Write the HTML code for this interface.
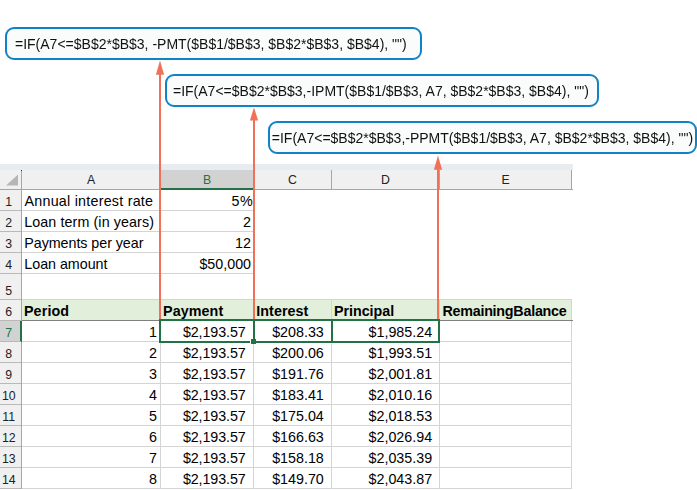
<!DOCTYPE html>
<html lang="en"><head><meta charset="utf-8"><title>Loan amortization formulas</title>
<style>
html,body{margin:0;padding:0;background:#fff;}
body{width:697px;height:490px;position:relative;overflow:hidden;font-family:"Liberation Sans",sans-serif;}
body>div,body>svg{position:absolute;}
.t{font-size:14.3px;color:#000;white-space:nowrap;overflow:visible;}
.t.b{font-weight:bold;}
.t.hd{font-size:12.3px;color:#222;}
.t.hd.sel{color:#217346;}
.box{box-sizing:content-box;border:2px solid #0f83c4;border-radius:9px;background:#fafcfc;font-size:14px;color:#111;white-space:nowrap;overflow:hidden;will-change:transform;}
</style></head>
<body>
<div style="left:0px;top:164px;width:573px;height:6px;background:#e7ecf0;"></div>
<div style="left:0px;top:170px;width:572px;height:19px;background:#f0f0f0;"></div>
<div style="left:161px;top:170px;width:92px;height:18px;background:#d2d2d2;"></div>
<div style="left:161px;top:188px;width:93px;height:2px;background:#217346;"></div>
<div style="left:0px;top:189px;width:161px;height:1px;background:#a6a6a6;"></div>
<div style="left:254px;top:189px;width:319px;height:1px;background:#a6a6a6;"></div>
<div style="left:21px;top:170px;width:1px;height:19px;background:#a6a6a6;"></div>
<div style="left:160px;top:170px;width:1px;height:19px;background:#a6a6a6;"></div>
<div style="left:253px;top:170px;width:1px;height:19px;background:#a6a6a6;"></div>
<div style="left:331px;top:170px;width:1px;height:19px;background:#a6a6a6;"></div>
<div style="left:439px;top:170px;width:1px;height:19px;background:#a6a6a6;"></div>
<div style="left:571px;top:170px;width:1px;height:19px;background:#a6a6a6;"></div>
<div style="left:21px;top:170px;width:1px;height:1px;background:#333;"></div>
<svg style="left:5px;top:173px" width="14" height="14" viewBox="0 0 14 14"><polygon points="13,1.5 13,12.5 1,12.5" fill="#b6b6b6"/></svg>
<div class="t hd" style="left:22px;top:171px;width:138px;height:19px;line-height:19px;text-align:center;">A</div>
<div class="t hd sel" style="left:161px;top:171px;width:92px;height:19px;line-height:19px;text-align:center;">B</div>
<div class="t hd" style="left:254px;top:171px;width:77px;height:19px;line-height:19px;text-align:center;">C</div>
<div class="t hd" style="left:332px;top:171px;width:107px;height:19px;line-height:19px;text-align:center;">D</div>
<div class="t hd" style="left:440px;top:171px;width:131px;height:19px;line-height:19px;text-align:center;">E</div>
<div style="left:0px;top:190px;width:21px;height:298px;background:#f0f0f0;"></div>
<div style="left:21px;top:190px;width:1px;height:299px;background:#a6a6a6;"></div>
<div style="left:0px;top:321px;width:20px;height:20px;background:#d2d2d2;"></div>
<div style="left:20px;top:321px;width:2px;height:21px;background:#217346;"></div>
<div style="left:0px;top:210px;width:21px;height:1px;background:#b9b9b9;"></div>
<div class="t hd" style="left:0px;top:192px;width:17.5px;height:20px;line-height:20px;text-align:center;">1</div>
<div style="left:0px;top:231px;width:21px;height:1px;background:#b9b9b9;"></div>
<div class="t hd" style="left:0px;top:213px;width:17.5px;height:20px;line-height:20px;text-align:center;">2</div>
<div style="left:0px;top:252px;width:21px;height:1px;background:#b9b9b9;"></div>
<div class="t hd" style="left:0px;top:234px;width:17.5px;height:20px;line-height:20px;text-align:center;">3</div>
<div style="left:0px;top:273px;width:21px;height:1px;background:#b9b9b9;"></div>
<div class="t hd" style="left:0px;top:255px;width:17.5px;height:20px;line-height:20px;text-align:center;">4</div>
<div style="left:0px;top:299px;width:21px;height:1px;background:#b9b9b9;"></div>
<div class="t hd" style="left:0px;top:281px;width:17.5px;height:20px;line-height:20px;text-align:center;">5</div>
<div style="left:0px;top:320px;width:21px;height:1px;background:#b9b9b9;"></div>
<div class="t hd" style="left:0px;top:302px;width:17.5px;height:20px;line-height:20px;text-align:center;">6</div>
<div style="left:0px;top:341px;width:21px;height:1px;background:#b9b9b9;"></div>
<div class="t hd sel" style="left:0px;top:323px;width:17.5px;height:20px;line-height:20px;text-align:center;">7</div>
<div style="left:0px;top:362px;width:21px;height:1px;background:#b9b9b9;"></div>
<div class="t hd" style="left:0px;top:344px;width:17.5px;height:20px;line-height:20px;text-align:center;">8</div>
<div style="left:0px;top:383px;width:21px;height:1px;background:#b9b9b9;"></div>
<div class="t hd" style="left:0px;top:365px;width:17.5px;height:20px;line-height:20px;text-align:center;">9</div>
<div style="left:0px;top:404px;width:21px;height:1px;background:#b9b9b9;"></div>
<div class="t hd" style="left:0px;top:386px;width:17.5px;height:20px;line-height:20px;text-align:center;">10</div>
<div style="left:0px;top:425px;width:21px;height:1px;background:#b9b9b9;"></div>
<div class="t hd" style="left:0px;top:407px;width:17.5px;height:20px;line-height:20px;text-align:center;">11</div>
<div style="left:0px;top:446px;width:21px;height:1px;background:#b9b9b9;"></div>
<div class="t hd" style="left:0px;top:428px;width:17.5px;height:20px;line-height:20px;text-align:center;">12</div>
<div style="left:0px;top:467px;width:21px;height:1px;background:#b9b9b9;"></div>
<div class="t hd" style="left:0px;top:449px;width:17.5px;height:20px;line-height:20px;text-align:center;">13</div>
<div style="left:0px;top:488px;width:21px;height:1px;background:#b9b9b9;"></div>
<div class="t hd" style="left:0px;top:470px;width:17.5px;height:20px;line-height:20px;text-align:center;">14</div>
<div style="left:22px;top:210px;width:233px;height:1px;background:#d4d4d4;"></div>
<div style="left:22px;top:231px;width:233px;height:1px;background:#d4d4d4;"></div>
<div style="left:22px;top:252px;width:233px;height:1px;background:#d4d4d4;"></div>
<div style="left:22px;top:273px;width:233px;height:1px;background:#d4d4d4;"></div>
<div style="left:160px;top:190px;width:1px;height:84px;background:#d4d4d4;"></div>
<div style="left:254px;top:190px;width:1px;height:84px;background:#d4d4d4;"></div>
<div style="left:22px;top:299px;width:550px;height:1px;background:#d4d4d4;"></div>
<div style="left:22px;top:300px;width:550px;height:20px;background:#e2efda;"></div>
<div style="left:160px;top:300px;width:1px;height:20px;background:#d0d8cb;"></div>
<div style="left:253px;top:300px;width:1px;height:20px;background:#d0d8cb;"></div>
<div style="left:331px;top:300px;width:1px;height:20px;background:#d0d8cb;"></div>
<div style="left:439px;top:300px;width:1px;height:20px;background:#d0d8cb;"></div>
<div style="left:571px;top:300px;width:1px;height:20px;background:#d0d8cb;"></div>
<div style="left:22px;top:320px;width:551px;height:1px;background:#808080;"></div>
<div style="left:22px;top:341px;width:550px;height:1px;background:#d4d4d4;"></div>
<div style="left:22px;top:362px;width:550px;height:1px;background:#d4d4d4;"></div>
<div style="left:22px;top:383px;width:550px;height:1px;background:#d4d4d4;"></div>
<div style="left:22px;top:404px;width:550px;height:1px;background:#d4d4d4;"></div>
<div style="left:22px;top:425px;width:550px;height:1px;background:#d4d4d4;"></div>
<div style="left:22px;top:446px;width:550px;height:1px;background:#d4d4d4;"></div>
<div style="left:22px;top:467px;width:550px;height:1px;background:#d4d4d4;"></div>
<div style="left:22px;top:488px;width:550px;height:1px;background:#d4d4d4;"></div>
<div style="left:160px;top:321px;width:1px;height:168px;background:#d4d4d4;"></div>
<div style="left:253px;top:321px;width:1px;height:168px;background:#d4d4d4;"></div>
<div style="left:331px;top:321px;width:1px;height:168px;background:#d4d4d4;"></div>
<div style="left:439px;top:321px;width:1px;height:168px;background:#d4d4d4;"></div>
<div style="left:571px;top:321px;width:1px;height:168px;background:#d4d4d4;"></div>
<div class="t " id="c0r1" style="left:24.49px;top:191px;height:20px;line-height:20px;letter-spacing:0.239px;">Annual interest rate</div>
<div class="t " id="c0r2" style="left:24.16px;top:212px;height:20px;line-height:20px;letter-spacing:0.100px;">Loan term (in years)</div>
<div class="t " id="c0r3" style="left:24.28px;top:233px;height:20px;line-height:20px;letter-spacing:-0.053px;">Payments per year</div>
<div class="t " id="c0r4" style="left:24.35px;top:254px;height:20px;line-height:20px;letter-spacing:-0.034px;">Loan amount</div>
<div class="t " id="c1r1" style="right:444.28px;margin-right:-0.460px;top:191px;height:20px;line-height:20px;letter-spacing:0.460px;">5%</div>
<div class="t " id="c1r2" style="right:446.00px;margin-right:0.000px;top:212px;height:20px;line-height:20px;">2</div>
<div class="t " id="c1r3" style="right:446.00px;margin-right:0.000px;top:233px;height:20px;line-height:20px;">12</div>
<div class="t " id="c1r4" style="right:445.93px;margin-right:-0.000px;top:254px;height:20px;line-height:20px;letter-spacing:0.000px;">$50,000</div>
<div class="t b" id="c0r6" style="left:23.94px;top:301px;height:20px;line-height:20px;letter-spacing:0.136px;">Period</div>
<div class="t b" id="c1r6" style="left:163.04px;top:301px;height:20px;line-height:20px;letter-spacing:0.097px;">Payment</div>
<div class="t b" id="c2r6" style="left:256.22px;top:301px;height:20px;line-height:20px;letter-spacing:0.066px;">Interest</div>
<div class="t b" id="c3r6" style="left:333.95px;top:301px;height:20px;line-height:20px;letter-spacing:-0.024px;">Principal</div>
<div class="t b" id="c4r6" style="left:442.41px;top:301px;height:20px;line-height:20px;letter-spacing:-0.238px;">RemainingBalance</div>
<div class="t " id="c0r7" style="right:540.00px;margin-right:0.000px;top:322px;height:20px;line-height:20px;">1</div>
<div class="t " id="c1r7" style="right:451.31px;margin-right:0.100px;top:322px;height:20px;line-height:20px;letter-spacing:-0.100px;">$2,193.57</div>
<div class="t " id="c2r7" style="right:373.20px;margin-right:0.003px;top:322px;height:20px;line-height:20px;letter-spacing:-0.003px;">$208.33</div>
<div class="t " id="c3r7" style="right:264.86px;margin-right:-0.000px;top:322px;height:20px;line-height:20px;letter-spacing:0.000px;">$1,985.24</div>
<div class="t " id="c0r8" style="right:540.00px;margin-right:0.000px;top:343px;height:20px;line-height:20px;">2</div>
<div class="t " id="c1r8" style="right:451.31px;margin-right:0.100px;top:343px;height:20px;line-height:20px;letter-spacing:-0.100px;">$2,193.57</div>
<div class="t " id="c2r8" style="right:373.20px;margin-right:0.003px;top:343px;height:20px;line-height:20px;letter-spacing:-0.003px;">$200.06</div>
<div class="t " id="c3r8" style="right:264.86px;margin-right:-0.000px;top:343px;height:20px;line-height:20px;letter-spacing:0.000px;">$1,993.51</div>
<div class="t " id="c0r9" style="right:540.00px;margin-right:0.000px;top:364px;height:20px;line-height:20px;">3</div>
<div class="t " id="c1r9" style="right:451.31px;margin-right:0.100px;top:364px;height:20px;line-height:20px;letter-spacing:-0.100px;">$2,193.57</div>
<div class="t " id="c2r9" style="right:373.20px;margin-right:0.003px;top:364px;height:20px;line-height:20px;letter-spacing:-0.003px;">$191.76</div>
<div class="t " id="c3r9" style="right:264.86px;margin-right:-0.000px;top:364px;height:20px;line-height:20px;letter-spacing:0.000px;">$2,001.81</div>
<div class="t " id="c0r10" style="right:540.00px;margin-right:0.000px;top:385px;height:20px;line-height:20px;">4</div>
<div class="t " id="c1r10" style="right:451.31px;margin-right:0.100px;top:385px;height:20px;line-height:20px;letter-spacing:-0.100px;">$2,193.57</div>
<div class="t " id="c2r10" style="right:373.20px;margin-right:0.003px;top:385px;height:20px;line-height:20px;letter-spacing:-0.003px;">$183.41</div>
<div class="t " id="c3r10" style="right:264.86px;margin-right:-0.000px;top:385px;height:20px;line-height:20px;letter-spacing:0.000px;">$2,010.16</div>
<div class="t " id="c0r11" style="right:540.00px;margin-right:0.000px;top:406px;height:20px;line-height:20px;">5</div>
<div class="t " id="c1r11" style="right:451.31px;margin-right:0.100px;top:406px;height:20px;line-height:20px;letter-spacing:-0.100px;">$2,193.57</div>
<div class="t " id="c2r11" style="right:373.20px;margin-right:0.003px;top:406px;height:20px;line-height:20px;letter-spacing:-0.003px;">$175.04</div>
<div class="t " id="c3r11" style="right:264.86px;margin-right:-0.000px;top:406px;height:20px;line-height:20px;letter-spacing:0.000px;">$2,018.53</div>
<div class="t " id="c0r12" style="right:540.00px;margin-right:0.000px;top:427px;height:20px;line-height:20px;">6</div>
<div class="t " id="c1r12" style="right:451.31px;margin-right:0.100px;top:427px;height:20px;line-height:20px;letter-spacing:-0.100px;">$2,193.57</div>
<div class="t " id="c2r12" style="right:373.20px;margin-right:0.003px;top:427px;height:20px;line-height:20px;letter-spacing:-0.003px;">$166.63</div>
<div class="t " id="c3r12" style="right:264.86px;margin-right:-0.000px;top:427px;height:20px;line-height:20px;letter-spacing:0.000px;">$2,026.94</div>
<div class="t " id="c0r13" style="right:540.00px;margin-right:0.000px;top:448px;height:20px;line-height:20px;">7</div>
<div class="t " id="c1r13" style="right:451.31px;margin-right:0.100px;top:448px;height:20px;line-height:20px;letter-spacing:-0.100px;">$2,193.57</div>
<div class="t " id="c2r13" style="right:373.20px;margin-right:0.003px;top:448px;height:20px;line-height:20px;letter-spacing:-0.003px;">$158.18</div>
<div class="t " id="c3r13" style="right:264.86px;margin-right:-0.000px;top:448px;height:20px;line-height:20px;letter-spacing:0.000px;">$2,035.39</div>
<div class="t " id="c0r14" style="right:540.00px;margin-right:0.000px;top:469px;height:20px;line-height:20px;">8</div>
<div class="t " id="c1r14" style="right:451.31px;margin-right:0.100px;top:469px;height:20px;line-height:20px;letter-spacing:-0.100px;">$2,193.57</div>
<div class="t " id="c2r14" style="right:373.20px;margin-right:0.003px;top:469px;height:20px;line-height:20px;letter-spacing:-0.003px;">$149.70</div>
<div class="t " id="c3r14" style="right:264.86px;margin-right:-0.000px;top:469px;height:20px;line-height:20px;letter-spacing:0.000px;">$2,043.87</div>
<div style="left:159px;top:319px;width:281px;height:2px;background:#217346;"></div>
<div style="left:159px;top:341px;width:91px;height:2px;background:#217346;"></div>
<div style="left:253px;top:341px;width:187px;height:2px;background:#217346;"></div>
<div style="left:159px;top:319px;width:2px;height:24px;background:#217346;"></div>
<div style="left:253px;top:319px;width:2px;height:22px;background:#217346;"></div>
<div style="left:331px;top:319px;width:2px;height:24px;background:#217346;"></div>
<div style="left:438px;top:319px;width:2px;height:24px;background:#217346;"></div>
<div style="left:250px;top:338px;width:1px;height:6px;background:#fff;"></div>
<div style="left:251px;top:339px;width:5px;height:5px;background:#217346;"></div>
<svg style="left:154px;top:59px" width="12" height="260" viewBox="0 0 12 260"><rect x="5" y="14.70" width="2" height="245.30" fill="#f0705a"/><polygon points="6,1.50 10.1,15.70 1.9,15.70" fill="#f0705a"/></svg>
<svg style="left:248px;top:106px" width="12" height="213" viewBox="0 0 12 213"><rect x="5" y="13.40" width="2" height="199.60" fill="#f0705a"/><polygon points="6,1.40 10.1,14.40 1.9,14.40" fill="#f0705a"/></svg>
<svg style="left:432px;top:154px" width="12" height="165" viewBox="0 0 12 165"><rect x="5" y="14.80" width="2" height="150.20" fill="#f0705a"/><polygon points="6,1.60 10.1,15.80 1.9,15.80" fill="#f0705a"/></svg>
<div class="box" style="left:5px;top:27px;width:405px;height:28px;line-height:29px;padding-left:8px;padding-top:1px">=IF(A7&lt;=$B$2*$B$3, -PMT($B$1/$B$3, $B$2*$B$3, $B$4), "")</div>
<div class="box" style="left:165px;top:74px;width:424px;height:28px;line-height:29px;padding-left:6px;padding-top:1px">=IF(A7&lt;=$B$2*$B$3,-IPMT($B$1/$B$3, A7, $B$2*$B$3, $B$4), "")</div>
<div class="box" style="left:268px;top:121px;width:423.2px;height:28px;line-height:29px;padding-left:1.8px;padding-top:1px">=IF(A7&lt;=$B$2*$B$3,-PPMT($B$1/$B$3, A7, $B$2*$B$3, $B$4), "")</div>
</body></html>
